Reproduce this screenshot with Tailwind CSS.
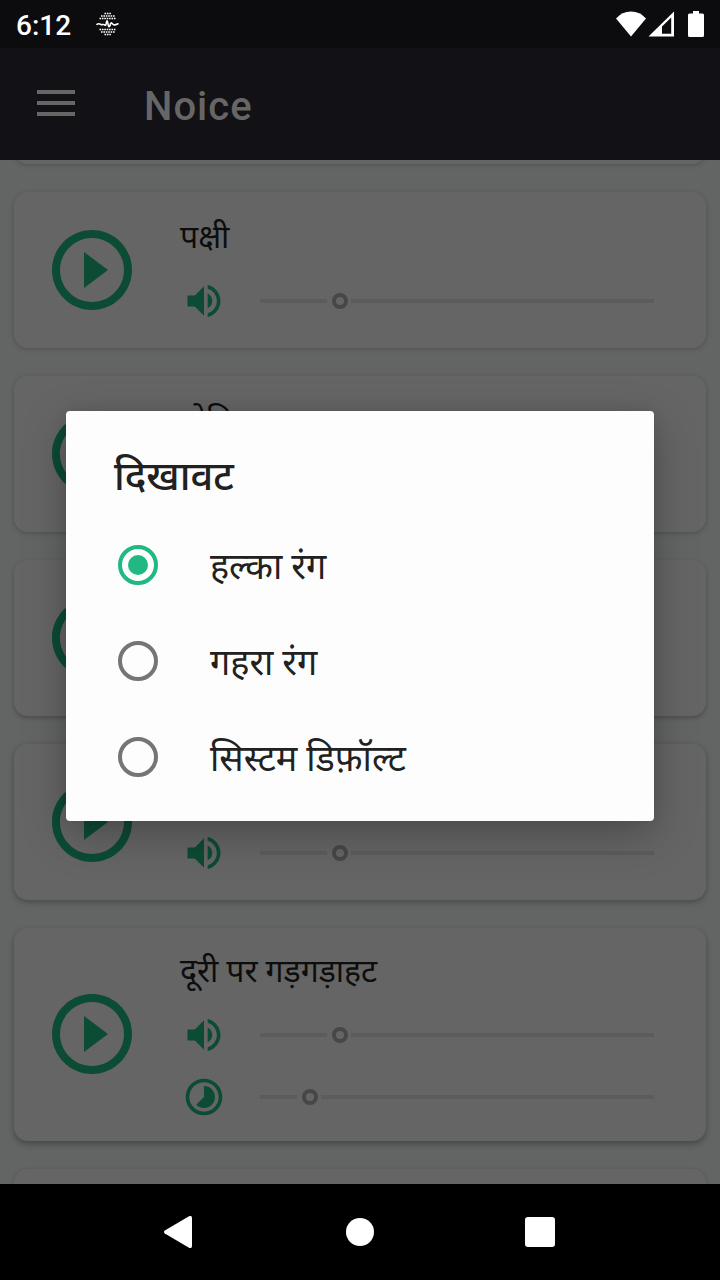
<!DOCTYPE html>
<html lang="hi">
<head>
<meta charset="utf-8">
<title>Noice</title>
<script src="https://cdn.jsdelivr.net/npm/@tailwindcss/browser@4"></script>
</head>
<body class="w-[720px] h-[1280px] overflow-hidden bg-black font-['Roboto','Noto_Sans',sans-serif]">
<svg class="hidden">
  <symbol id="play" viewBox="0 0 24 24"><path d="M10 16.5l6-4.5-6-4.5v9zM12 2C6.48 2 2 6.48 2 12s4.48 10 10 10 10-4.48 10-10S17.52 2 12 2zm0 18c-4.41 0-8-3.59-8-8s3.59-8 8-8 8 3.59 8 8-3.59 8-8 8z"/></symbol>
  <symbol id="vol" viewBox="0 0 24 24"><path d="M3 9v6h4l5 5V4L7 9H3zm13.5 3c0-1.77-1.02-3.29-2.5-4.03v8.05c1.48-.73 2.5-2.25 2.5-4.02zM14 3.23v2.06c2.89.86 5 3.54 5 6.71s-2.11 5.85-5 6.71v2.06c4.01-.91 7-4.49 7-8.77s-2.99-7.86-7-8.77z"/></symbol>
  <symbol id="lapse" viewBox="0 0 24 24"><path d="M16.24 7.76C15.07 6.59 13.54 6 12 6v6l-4.24 4.24c2.34 2.34 6.14 2.34 8.49 0 2.34-2.34 2.34-6.14-.01-8.48zM12 2C6.48 2 2 6.48 2 12s4.48 10 10 10 10-4.48 10-10S17.52 2 12 2zm0 18c-4.42 0-8-3.58-8-8s3.58-8 8-8 8 3.58 8 8-3.58 8-8 8z"/></symbol>
</svg>
<div class="relative flex flex-col w-[720px] h-[1280px]">
  <header class="shrink-0">
    <div class="h-12 bg-[#0c0c0e] flex items-center text-white">
      <span class="ml-4 mt-[3px] w-[80px] text-[28px] leading-8 font-medium">6:12</span>
      <svg class="w-6 h-6" viewBox="0 0 24 24" fill="none" stroke="#fff">
        <path stroke-width="1.5" stroke-dasharray="1.600 .8" d="M8.500 1.500h6.500M5 4h14M3.500 6.500h16.500M3.500 17.500h16.500M5 20h14M8.500 22.500h6.500"/>
        <path stroke-width="1.6" stroke-linecap="round" stroke-linejoin="round" d="M1 12.300c1.500-1 2.500-.6 4 .2s2.500-.8 3.500.3S10 13.500 10.500 10.200s1.300.6 1.800 3.200S14 14 14.500 12s1.500-.8 2.500.3 2.500.8 5-.5"/>
      </svg>
      <div class="ml-auto mr-4 flex items-center">
        <svg class="w-[30px] h-[26px]" viewBox="0 0 30 26" fill="#fff"><path d="M15 25.500L0 7.500Q6 .5 15 .5T30 7.500z"/></svg>
        <svg class="w-[26px] h-[26px] ml-[2px]" viewBox="0 0 26 26" fill="#fff"><path fill-rule="evenodd" d="M.5 25.500L26 .5v25zM14 22.700h9.200V6.500L14 15.500z"/></svg>
        <svg class="w-4 h-[26px] ml-[14px]" viewBox="0 0 16 26" fill="#fff"><path d="M5 0h6v2.500h3.500q1.500 0 1.500 1.500v20.500q0 1.500-1.500 1.500h-13q-1.500 0-1.500-1.500V4q0-1.500 1.500-1.500H5z"/></svg>
      </div>
    </div>
    <div class="h-28 bg-[#121116] flex items-center">
      <div class="ml-[37px] -mt-[2px] w-[38px] flex flex-col gap-[7px]">
        <i class="h-1 bg-[#666]"></i><i class="h-1 bg-[#666]"></i><i class="h-1 bg-[#666]"></i>
      </div>
      <h1 class="ml-[69px] mt-[6px] text-[40px] leading-[48px] font-medium tracking-[1px] text-[#666]">Noice</h1>
    </div>
  </header>

  <main class="h-[1024px] shrink-0 overflow-hidden bg-[#626563] px-[14px] flex flex-col gap-7 text-[#0c4b34]">
    <section class="h-1 shrink-0 -mb-px"><div class="-mt-[40px] h-11 rounded-[14px] bg-[#656565] shadow-[0_1px_5px_rgba(0,0,0,0.2)]"></div></section>

    <section class="mt-px h-[156px] shrink-0 rounded-[14px] bg-[#656565] shadow-[0_1px_5px_rgba(0,0,0,0.2)] flex items-center">
      <svg class="ml-[30px] size-24" fill="currentColor"><use href="#play"/></svg>
      <div class="ml-10 h-full">
        <h2 class="pt-[21px] h-[87px] text-[32px] leading-[48px] text-[#0d0d0d]">पक्षी</h2>
        <div class="flex items-center h-11 -ml-0.5"><svg class="size-11 ml-1" fill="currentColor"><use href="#vol"/></svg><div class="ml-[34px] flex items-center w-[394px]"><i class="h-1 w-[67px] bg-[#5c5c5c]"></i><i class="ml-[5px] mr-[3px] size-4 rounded-full border-4 border-[#474747]"></i><i class="h-1 flex-1 bg-[#5c5c5c]"></i></div></div>
      </div>
    </section>

    <section class="h-[156px] shrink-0 rounded-[14px] bg-[#656565] shadow-[0_1px_5px_rgba(0,0,0,0.22)] flex items-center">
      <svg class="ml-[30px] size-24" fill="currentColor"><use href="#play"/></svg>
      <div class="ml-10 h-full"><h2 class="pt-[21px] text-[32px] leading-[48px] text-[#0d0d0d]">बोकि</h2></div>
    </section>

    <section class="h-[156px] shrink-0 rounded-[14px] bg-[#656565] shadow-[0_2px_5px_rgba(0,0,0,0.24)] flex items-center">
      <svg class="ml-[30px] size-24" fill="currentColor"><use href="#play"/></svg>
    </section>

    <section class="h-[156px] shrink-0 rounded-[14px] bg-[#656565] shadow-[0_2px_6px_rgba(0,0,0,0.28)] flex items-center">
      <svg class="ml-[30px] size-24" fill="currentColor"><use href="#play"/></svg>
      <div class="ml-10 h-full pt-[87px]">
        <div class="flex items-center h-11 -ml-0.5"><svg class="size-11 ml-1" fill="currentColor"><use href="#vol"/></svg><div class="ml-[34px] flex items-center w-[394px]"><i class="h-1 w-[67px] bg-[#5c5c5c]"></i><i class="ml-[5px] mr-[3px] size-4 rounded-full border-4 border-[#474747]"></i><i class="h-1 flex-1 bg-[#5c5c5c]"></i></div></div>
      </div>
    </section>

    <section class="h-[213px] shrink-0 rounded-[14px] bg-[#656565] shadow-[0_3px_6px_rgba(0,0,0,0.3)] flex items-center">
      <svg class="ml-[30px] -mt-px size-24" fill="currentColor"><use href="#play"/></svg>
      <div class="ml-10 h-full">
        <h2 class="pt-[19px] h-[85px] text-[32px] leading-[48px] text-[#0d0d0d]">दूरी पर गड़गड़ाहट</h2>
        <div class="flex items-center h-11 -ml-0.5"><svg class="size-11 ml-1" fill="currentColor"><use href="#vol"/></svg><div class="ml-[34px] flex items-center w-[394px]"><i class="h-1 w-[67px] bg-[#5c5c5c]"></i><i class="ml-[5px] mr-[3px] size-4 rounded-full border-4 border-[#474747]"></i><i class="h-1 flex-1 bg-[#5c5c5c]"></i></div></div>
        <div class="mt-[18px] flex items-center h-11 -ml-0.5"><svg class="size-11 ml-1" fill="currentColor"><use href="#lapse"/></svg><div class="ml-[34px] flex items-center w-[394px]"><i class="h-1 w-[37px] bg-[#5c5c5c]"></i><i class="ml-[5px] mr-[3px] size-4 rounded-full border-4 border-[#474747]"></i><i class="h-1 flex-1 bg-[#5c5c5c]"></i></div></div>
      </div>
    </section>

    <section class="h-[156px] shrink-0 rounded-[14px] bg-[#656565] shadow-[0_1px_4px_rgba(0,0,0,0.2)]"></section>
  </main>

  <nav class="h-24 shrink-0 bg-black flex items-center">
    <svg class="ml-[164px] w-7 h-8" viewBox="0 0 28 32" fill="#fff"><path d="M.8 14.500L25 .3Q28-.8 28 2v28q0 2.800-3 1.700L.8 17.500Q-.8 16 .8 14.500z"/></svg>
    <div class="ml-[154px] size-7 rounded-full bg-white"></div>
    <div class="ml-[151px] size-[30px] rounded-[3px] bg-white"></div>
  </nav>

  <div role="dialog" class="absolute left-[66px] top-[411px] w-[588px] h-[410px] rounded-[4px] bg-[#fdfdfd] text-[#212121] shadow-[0_14px_44px_rgba(0,0,0,0.25),0_0_14px_rgba(0,0,0,0.08)]">
    <h2 class="pl-12 pt-[38px] h-[106px] text-[40px] leading-[56px] font-medium">दिखावट</h2>
    <div class="flex items-center h-24 pl-[52px]"><i class="size-10 rounded-full border-4 border-[#1fb981] flex items-center justify-center"><b class="size-5 rounded-full bg-[#1fb981]"></b></i><span class="ml-[52px] mt-1 text-[36px] leading-[52px]">हल्का रंग</span></div>
    <div class="flex items-center h-24 pl-[52px]"><i class="size-10 rounded-full border-4 border-[#757575]"></i><span class="ml-[52px] mt-1 text-[36px] leading-[52px]">गहरा रंग</span></div>
    <div class="flex items-center h-24 pl-[52px]"><i class="size-10 rounded-full border-4 border-[#757575]"></i><span class="ml-[52px] mt-1 text-[36px] leading-[52px]">सिस्टम डिफ़ॉल्ट</span></div>
  </div>
</div>
</body>
</html>
